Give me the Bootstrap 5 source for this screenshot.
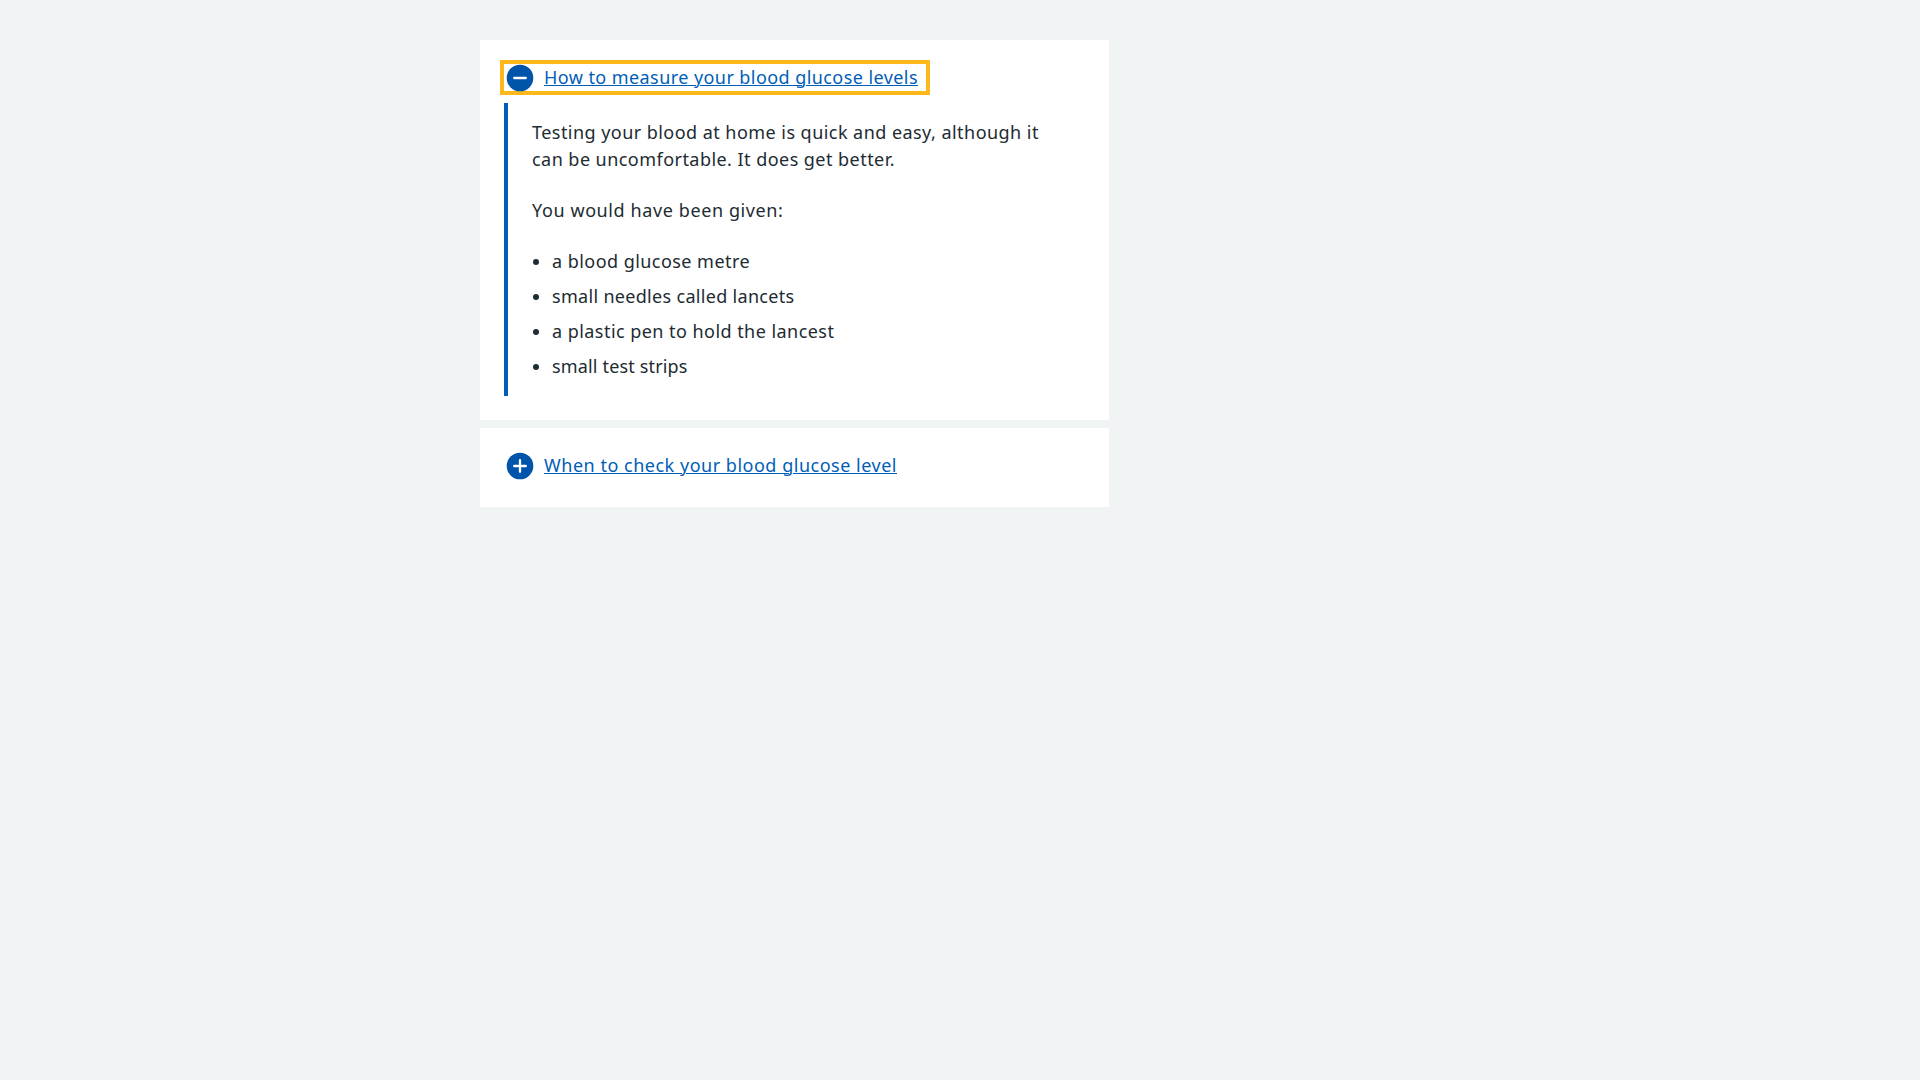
<!DOCTYPE html>
<html lang="en">
<head>
<meta charset="utf-8">
<meta name="viewport" content="width=device-width, initial-scale=1">
<title>Blood glucose expanders</title>
<link href="https://cdn.jsdelivr.net/npm/bootstrap@5.3.0/dist/css/bootstrap.min.css" rel="stylesheet">
<style>
  body { background: #f0f4f5; color: #212b32; font-family: "Noto Sans", sans-serif; font-size: 18px; line-height: 27px; letter-spacing: .454px; }
  .expander-column { width: 629px; margin-left: 480px; padding-top: 40px; }
  .expander-panel { padding: 24px; }
  .expander-panel.is-closed { padding-bottom: 28px; }
  .expander-link { height: 27px; padding: 0 8px 0 2px; gap: 10px; color: #005eb8; }
  .expander-link.is-focused { box-shadow: 0 0 0 4px #ffb81c; }
  .expander-link span { text-decoration: underline; text-decoration-thickness: 1px; text-underline-offset: 1px; }
  .expander-link svg { width: 28px; height: 28px; flex: none; overflow: visible; margin-bottom: -1px; }
  .expander-body { margin-top: 12px; border-left: 4px solid #005eb8; padding: 16px 24px 15px; height: 293px; }
  .expander-body p { margin-bottom: 24px; }
  .expander-body li { margin-bottom: 8px; gap: 13px; }
  .expander-body li::before { content: ""; width: 6.5px; height: 6.5px; margin: 1px 0 0 .5px; border-radius: 50%; background: #212b32; flex: none; }
  .track-a { letter-spacing: .16px; }
  .track-b { letter-spacing: .31px; }
  .track-c { letter-spacing: .428px; }
  .track-d { letter-spacing: .514px; }
  .track-e { letter-spacing: .6px; }
</style>
<script src="https://cdn.jsdelivr.net/npm/bootstrap@5.3.0/dist/js/bootstrap.bundle.min.js"></script>
</head>
<body>
<main class="expander-column d-flex flex-column gap-2">
  <section class="expander-panel bg-white">
    <a class="expander-link is-focused d-inline-flex align-items-center text-decoration-none align-top" href="#" aria-expanded="true">
      <svg viewBox="0 0 28 28" aria-hidden="true"><circle cx="14" cy="14" r="13.3" fill="#0055aa"/><path d="M8.2 14h11.6" stroke="#fff" stroke-width="2.3" stroke-linecap="round"/></svg>
      <span class="track-c text-nowrap">How to measure your blood glucose levels</span>
    </a>
    <div class="expander-body">
      <p class="text-nowrap">Testing your blood at home is quick and easy, although it<br>can be uncomfortable. It does get better.</p>
      <p class="track-e">You would have been given:</p>
      <ul class="list-unstyled mb-0">
        <li class="d-flex align-items-center">a blood glucose metre</li>
        <li class="d-flex align-items-center track-b">small needles called lancets</li>
        <li class="d-flex align-items-center">a plastic pen to hold the lancest</li>
        <li class="d-flex align-items-center track-a">small test strips</li>
      </ul>
    </div>
  </section>
  <section class="expander-panel is-closed bg-white">
    <a class="expander-link d-inline-flex align-items-center text-decoration-none align-top" href="#" aria-expanded="false">
      <svg viewBox="0 0 28 28" aria-hidden="true"><circle cx="14" cy="14" r="13.3" fill="#0055aa"/><path d="M8.2 14h11.6M14 8.2v11.6" stroke="#fff" stroke-width="2.3" stroke-linecap="round"/></svg>
      <span class="track-d text-nowrap">When to check your blood glucose level</span>
    </a>
  </section>
</main>
</body>
</html>
